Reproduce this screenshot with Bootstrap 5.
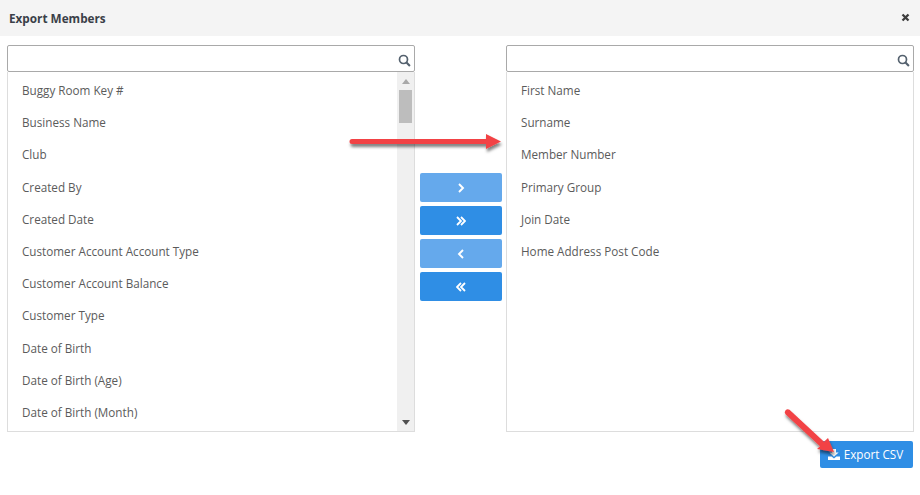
<!DOCTYPE html>
<html lang="en">
<head>
<meta charset="utf-8">
<title>Export Members</title>
<link href="https://cdn.jsdelivr.net/npm/bootstrap@5.3.0/dist/css/bootstrap.min.css" rel="stylesheet">
<style>
html,body{height:495px;overflow:hidden;background:#fff}
body{font-family:"Open Sans",sans-serif;font-size:11.7px;color:#555;position:relative}
.dlg-head{height:36px;background:#f4f4f4;padding:1px 10px 0 9px;color:#333}
.dlg-title{font-size:11.75px;font-weight:700;color:#3a3f48}
.dlg-x{margin-bottom:2px}
.dlg-body{padding:9px 6px 0 7px}
.pick-col{width:408px;flex:none}
.pick-mid{width:91px;flex:none;padding:128px 4px 0 5px}
.search-box{height:27px;border:1px solid #a9a9a9;border-radius:2px;background:#fff;padding:3px 3px 0 0}
.pick-list{height:360px;border:1px solid #ddd;border-top:0;overflow:hidden}
.pick-items{list-style:none;margin:0;padding:2px 0 0 14px;flex:1;color:#5b5b5b}
.pick-items li{height:32.2px;line-height:32.2px;white-space:nowrap}
.fake-bar{width:17px;flex:none;background:#f0f0f0;padding:0 2px}
.bar-thumb{height:33px;background:#bdbdbd}
.bar-btn{height:18px}
.btn.mv-btn{height:29px;padding-bottom:3px;--bs-btn-padding-y:0;--bs-btn-padding-x:0;--bs-btn-border-width:0;--bs-btn-border-radius:2px;--bs-btn-bg:#2f8ee5;--bs-btn-hover-bg:#2f8ee5;--bs-btn-color:#fff}
.btn.mv-btn.is-off{background:#65a9ec;color:#fff}
.btn.csv-btn{width:93px;height:27px;margin-right:1px;padding-right:2px;--bs-btn-padding-y:0;--bs-btn-padding-x:0;--bs-btn-border-width:0;--bs-btn-border-radius:2px;--bs-btn-bg:#2f8ee5;--bs-btn-hover-bg:#2f8ee5;--bs-btn-color:#fff;--bs-btn-font-size:11.7px;--bs-btn-font-family:"Open Sans",sans-serif}
.foot-row{padding:9px 0 0}
.mark-over{position:absolute;left:0;top:0;pointer-events:none}
</style>
</head>
<body>
<div class="dlg-head d-flex align-items-center justify-content-between">
  <div class="dlg-title">Export Members</div>
  <svg width="9" height="9" viewBox="0 0 9 9" class="dlg-x"><path d="M1.500 1.500l6 6M7.500 1.500l-6 6" stroke="#3d3d3d" stroke-width="2.300"/></svg>
</div>
<div class="dlg-body">
  <div class="d-flex">
    <div class="pick-col">
      <div class="search-box d-flex align-items-center justify-content-end">
        <svg width="13" height="13" viewBox="0 0 13 13"><circle cx="5.500" cy="5.500" r="4" fill="none" stroke="#54616e" stroke-width="1.700"/><path d="M8.500 8.500l3.400 3.400" stroke="#54616e" stroke-width="2.100"/></svg>
      </div>
      <div class="pick-list d-flex">
        <ul class="pick-items">
          <li>Buggy Room Key #</li><li>Business Name</li><li>Club</li><li>Created By</li><li>Created Date</li><li>Customer Account Account Type</li><li>Customer Account Balance</li><li>Customer Type</li><li>Date of Birth</li><li>Date of Birth (Age)</li><li>Date of Birth (Month)</li>
        </ul>
        <div class="fake-bar d-flex flex-column">
          <div class="bar-btn d-flex align-items-center justify-content-center"><svg width="8" height="5" viewBox="0 0 8 5"><path d="M4 0L8 5H0z" fill="#a8a8a8"/></svg></div>
          <div class="bar-thumb"></div>
          <div class="flex-grow-1"></div>
          <div class="bar-btn d-flex align-items-center justify-content-center"><svg width="8" height="5" viewBox="0 0 8 5"><path d="M0 0H8L4 5z" fill="#505050"/></svg></div>
        </div>
      </div>
    </div>
    <div class="pick-mid d-flex flex-column gap-1">
      <button class="btn mv-btn is-off" type="button"><svg width="8" height="10" viewBox="0 0 8 10"><path d="M2 1l4 4-4 4" fill="none" stroke="#fff" stroke-width="1.900"/></svg></button>
      <button class="btn mv-btn" type="button"><svg width="10" height="10" viewBox="0 0 10 10"><path d="M1 1l4 4-4 4M5 1l4 4-4 4" fill="none" stroke="#fff" stroke-width="1.800"/></svg></button>
      <button class="btn mv-btn is-off" type="button"><svg width="8" height="10" viewBox="0 0 8 10"><path d="M6 1L2 5l4 4" fill="none" stroke="#fff" stroke-width="1.900"/></svg></button>
      <button class="btn mv-btn" type="button"><svg width="10" height="10" viewBox="0 0 10 10"><path d="M5 1L1 5l4 4M9 1L5 5l4 4" fill="none" stroke="#fff" stroke-width="1.800"/></svg></button>
    </div>
    <div class="pick-col">
      <div class="search-box d-flex align-items-center justify-content-end">
        <svg width="13" height="13" viewBox="0 0 13 13"><circle cx="5.500" cy="5.500" r="4" fill="none" stroke="#54616e" stroke-width="1.700"/><path d="M8.500 8.500l3.400 3.400" stroke="#54616e" stroke-width="2.100"/></svg>
      </div>
      <div class="pick-list d-flex">
        <ul class="pick-items">
          <li>First Name</li><li>Surname</li><li>Member Number</li><li>Primary Group</li><li>Join Date</li><li>Home Address Post Code</li>
        </ul>
      </div>
    </div>
  </div>
  <div class="foot-row d-flex justify-content-end">
    <button class="btn csv-btn d-flex align-items-center justify-content-center gap-1" type="button">
      <svg width="12" height="11" viewBox="0 0 12 11"><path d="M4 0h4v3.500h2.600L6 7.800 1.400 3.500H4z" fill="#fff"/><path d="M0 7.600h3.600L6 9.600l2.400-2H12V11H0z" fill="#fff"/></svg>
      <span>Export CSV</span>
    </button>
  </div>
</div>
<svg class="mark-over" width="920" height="495" viewBox="0 0 920 495">
  <defs><filter id="sh" x="-20%" y="-100%" width="140%" height="300%"><feDropShadow dx="1" dy="3" stdDeviation="1.800" flood-color="#000" flood-opacity=".5"/></filter></defs>
  <g filter="url(#sh)" fill="#f24345">
    <path d="M352 139H486V134L501 141.500 486 149V144H352a2.500 2.500 0 0 1 0-5z"/>
    <path d="M789.500 409.800L824 441.800 828 438 834 452 817 449 820 446.200 785.500 414.200a3 3 0 0 1 4-4.400z"/>
  </g>
</svg>
<script src="https://cdn.jsdelivr.net/npm/bootstrap@5.3.0/dist/js/bootstrap.bundle.min.js"></script>
</body>
</html>
